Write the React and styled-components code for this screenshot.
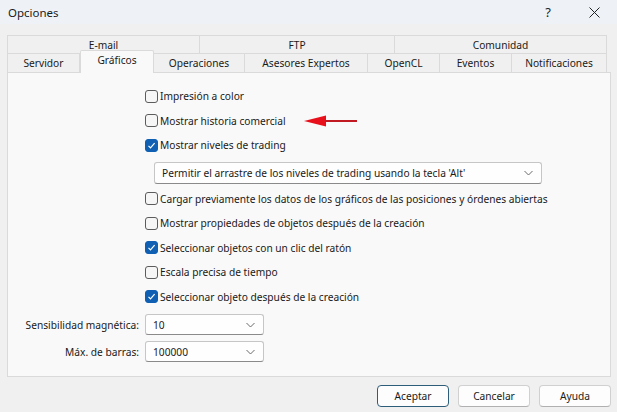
import styled, { createGlobalStyle } from 'styled-components'

const Global = createGlobalStyle`
  html, body {
    margin: 0;
    padding: 0;
    background: #f0f0f0;
  }
  body {
    font-family: "Noto Sans", "Open Sans", sans-serif;
    font-size: 10.2px;
    color: #1a1a1a;
  }
`

const Window = styled.div`
  width: 617px;
  height: 412px;
  background: #f0f0f0;
  display: flex;
  flex-direction: column;
  overflow: hidden;
`

const TitleBar = styled.div`
  height: 24px;
  display: flex;
  align-items: center;
  padding: 0 0 0 8px;
  background: #eef2f7;
  font-size: 11.5px;
`

const Title = styled.span`
  flex: 1;
`

const TitleButton = styled.span`
  width: 46px;
  display: flex;
  justify-content: center;
  font-size: 13px;
  color: #222;
`

const Body = styled.div`
  flex: 1;
  display: flex;
  flex-direction: column;
  padding: 11px 0 0 7px;
`

const TabRow = styled.div`
  display: flex;
  width: 600px;
  height: ${(p) => p.h}px;
  position: relative;
`

const Tab = styled.div`
  width: ${(p) => p.w}px;
  display: flex;
  align-items: center;
  justify-content: center;
  background: #f0f0f0;
  border: 1px solid #dadada;
  border-left: ${(p) => (p.first ? '1px solid #dadada' : 'none')};
  border-bottom: ${(p) => (p.bottom ? '1px solid #dadada' : 'none')};
  box-sizing: border-box;
  color: #1a1a1a;
`

const ActiveTab = styled(Tab)`
  position: relative;
  z-index: 2;
  margin-top: -3px;
  height: 23px;
  background: #f9f9f9;
  border-left: 1px solid #dadada;
  border-bottom: none;
  padding-bottom: 5px;
  border-radius: 2px 2px 0 0;
`

const Panel = styled.div`
  width: 604px;
  height: 305px;
  box-sizing: border-box;
  margin-top: -1px;
  background: #f9f9f9;
  border: 1px solid #dadada;
  padding-top: 11px;
  display: flex;
  flex-direction: column;
`

const CheckRow = styled.label`
  height: 24.5px;
  flex-shrink: 0;
  display: flex;
  align-items: center;
  padding-left: 137px;
  gap: 2px;
`

const Box = styled.span`
  width: 13px;
  height: 13px;
  box-sizing: border-box;
  border-radius: 3px;
  border: 1px solid ${(p) => (p.on ? '#0f5fb3' : '#5c5c5c')};
  background: ${(p) => (p.on ? '#0f5fb3' : '#f6f6f6')};
  display: flex;
  align-items: center;
  justify-content: center;
`

const Dropdown = styled.div`
  margin: 4px 0 3px 146px;
  width: ${(p) => p.w}px;
  height: 22px;
  flex-shrink: 0;
  box-sizing: border-box;
  border: 1px solid #c6c6c6;
  border-bottom-color: #8a8a8a;
  border-radius: 3px;
  background: #fefefe;
  display: flex;
  align-items: center;
  justify-content: space-between;
  padding: 0 8px 0 7px;
`

const FieldRow = styled.div`
  display: flex;
  align-items: center;
  height: 21px;
  margin-bottom: 6px;
`

const FieldLabel = styled.span`
  width: 131px;
  text-align: right;
  padding-right: 6px;
`

const SmallSelect = styled(Dropdown)`
  margin: 0;
  height: 21px;
`

const Fields = styled.div`
  margin-top: 5px;
`

const Footer = styled.div`
  display: flex;
  justify-content: flex-end;
  gap: 9px;
  padding: 8px 6px 0 0;
`

const Button = styled.button`
  width: 72px;
  height: 22px;
  font: inherit;
  color: #1a1a1a;
  background: #fdfdfd;
  border: 1px solid ${(p) => (p.primary ? '#2e5d79' : '#d0d0d0')};
  border-bottom-color: ${(p) => (p.primary ? '#2e5d79' : '#b0b0b0')};
  border-radius: 4px;
  padding: 0;
`

const Arrow = styled.svg`
  margin-left: 16px;
`

const Check = () => (
  <svg width="9" height="9" viewBox="0 0 9 9">
    <path d="M1.5 4.8 L3.5 6.8 L7.6 2.2" fill="none" stroke="#fff" strokeWidth="1.2" />
  </svg>
)

const Chevron = () => (
  <svg width="9" height="6" viewBox="0 0 9 6">
    <path d="M0.5 1 L4.5 5 L8.5 1" fill="none" stroke="#6a6a6a" strokeWidth="1" />
  </svg>
)

const CloseIcon = () => (
  <svg width="11" height="11" viewBox="0 0 11 11">
    <path d="M0.5 0.5 L10.5 10.5 M10.5 0.5 L0.5 10.5" stroke="#222" strokeWidth="1" />
  </svg>
)

const CheckItem = ({ on, children, arrow }) => (
  <CheckRow>
    <Box on={on}>{on && <Check />}</Box>
    <span>{children}</span>
    {arrow && (
      <Arrow width="53" height="12" viewBox="0 0 53 12">
        <path d="M0 6 L22 0.5 L22 11.5 Z" fill="#e8101a" />
        <rect x="21" y="5" width="32" height="2" fill="#c21a22" />
      </Arrow>
    )}
  </CheckRow>
)

const topTabs = [
  ['E-mail', 193],
  ['FTP', 195],
  ['Comunidad', 212],
]

const bottomTabs = [
  ['Servidor', 73],
  ['Gráficos', 74],
  ['Operaciones', 91],
  ['Asesores Expertos', 123],
  ['OpenCL', 72],
  ['Eventos', 72],
  ['Notificaciones', 95],
]

export default function App() {
  return (
    <Window>
      <Global />
      <TitleBar>
        <Title>Opciones</Title>
        <TitleButton>?</TitleButton>
        <TitleButton><CloseIcon /></TitleButton>
      </TitleBar>
      <Body>
        <TabRow h={18}>
          {topTabs.map(([t, w], i) => (
            <Tab key={t} w={w} first={i === 0}>{t}</Tab>
          ))}
        </TabRow>
        <TabRow h={20}>
          {bottomTabs.map(([t, w], i) =>
            t === 'Gráficos' ? (
              <ActiveTab key={t} w={w}>{t}</ActiveTab>
            ) : (
              <Tab key={t} w={w} first={i === 0} bottom>{t}</Tab>
            )
          )}
        </TabRow>
        <Panel>
          <CheckItem>Impresión a color</CheckItem>
          <CheckItem arrow>Mostrar historia comercial</CheckItem>
          <CheckItem on>Mostrar niveles de trading</CheckItem>
          <Dropdown w={388}>
            <span>Permitir el arrastre de los niveles de trading usando la tecla 'Alt'</span>
            <Chevron />
          </Dropdown>
          <CheckItem>Cargar previamente los datos de los gráficos de las posiciones y órdenes abiertas</CheckItem>
          <CheckItem>Mostrar propiedades de objetos después de la creación</CheckItem>
          <CheckItem on>Seleccionar objetos con un clic del ratón</CheckItem>
          <CheckItem>Escala precisa de tiempo</CheckItem>
          <CheckItem on>Seleccionar objeto después de la creación</CheckItem>
          <Fields>
            <FieldRow>
              <FieldLabel>Sensibilidad magnética:</FieldLabel>
              <SmallSelect w={119}>
                <span>10</span>
                <Chevron />
              </SmallSelect>
            </FieldRow>
            <FieldRow>
              <FieldLabel>Máx. de barras:</FieldLabel>
              <SmallSelect w={119}>
                <span>100000</span>
                <Chevron />
              </SmallSelect>
            </FieldRow>
          </Fields>
        </Panel>
        <Footer>
          <Button primary>Aceptar</Button>
          <Button>Cancelar</Button>
          <Button>Ayuda</Button>
        </Footer>
      </Body>
    </Window>
  )
}
